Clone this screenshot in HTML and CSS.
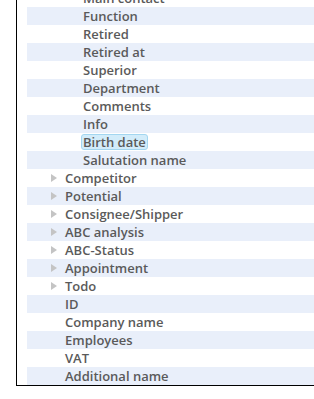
FILE: index.html
```html
<!DOCTYPE html>
<html>
<head>
	<meta charset="UTF-8">
	<title>Fields</title>
	<link rel="stylesheet" href="styles.css">
</head>
<body>
	<div class="panel">
		<ul class="tree">
			<li class="row lvl2">Main contact</li>
			<li class="row lvl2">Function</li>
			<li class="row lvl2">Retired</li>
			<li class="row lvl2">Retired at</li>
			<li class="row lvl2">Superior</li>
			<li class="row lvl2">Department</li>
			<li class="row lvl2">Comments</li>
			<li class="row lvl2">Info</li>
			<li class="row lvl2"><span class="sel">Birth date</span></li>
			<li class="row lvl2">Salutation name</li>
			<li class="row lvl1 node">Competitor</li>
			<li class="row lvl1 node">Potential</li>
			<li class="row lvl1 node">Consignee/Shipper</li>
			<li class="row lvl1 node">ABC analysis</li>
			<li class="row lvl1 node">ABC-Status</li>
			<li class="row lvl1 node">Appointment</li>
			<li class="row lvl1 node">Todo</li>
			<li class="row lvl1">ID</li>
			<li class="row lvl1">Company name</li>
			<li class="row lvl1">Employees</li>
			<li class="row lvl1">VAT</li>
			<li class="row lvl1">Additional name</li>
		</ul>
	</div>
</body>
</html>
```
FILE: styles.css
```css
body {
	margin: 0;
	background: #fff;
	font-family: "Open Sans", sans-serif;
	overflow: hidden;
}

.panel {
	margin: -11px 0 0 16px;
	border-left: 1px solid #000;
	border-bottom: 1px solid #000;
	padding-left: 10px;
}

.tree {
	list-style: none;
	margin: 0;
	padding: 0;
}

.row {
	position: relative;
	height: 18px;
	line-height: 18px;
	font-size: 13px;
	font-weight: 600;
	color: #5a5a5a;
	white-space: nowrap;
}

.row:nth-child(even) {
	background: #e9effa;
}

.lvl2 {
	padding-left: 56px;
}

.lvl1 {
	padding-left: 38px;
}

/* collapsed node marker */
.node::before {
	content: "";
	position: absolute;
	left: 24px;
	top: 5px;
	border-left: 6px solid #c4c4c4;
	border-top: 4px solid transparent;
	border-bottom: 4px solid transparent;
}

.sel {
	display: inline-block;
	background: #d2ecfa;
	border: 1px solid #a3d6f0;
	border-radius: 3px;
	margin-left: -2px;
	padding: 0 1px;
	line-height: 14px;
	vertical-align: top;
	margin-top: 1px;
}
```
